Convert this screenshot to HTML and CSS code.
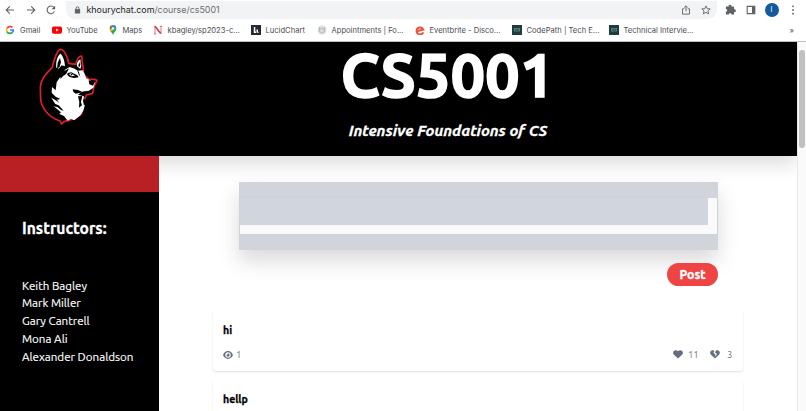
FILE: index.html
```html
<!DOCTYPE html>
<html lang="en">
<head>
<meta charset="utf-8">
<title>CS5001</title>
<link rel="stylesheet" href="styles.css">
</head>
<body>
<div class="browser">
  <div class="toolbar">
    <svg class="nav" viewBox="0 0 10 10"><path d="M9 5H1.4M4.8 1.4 1.2 5l3.6 3.6"/></svg>
    <svg class="nav" viewBox="0 0 10 10"><path d="M1 5h7.6M5.2 1.4 8.8 5 5.2 8.6"/></svg>
    <svg class="nav" viewBox="0 0 10 10"><path d="M8.4 6.4A3.8 3.8 0 1 1 7.9 2.5"/><path class="solid" d="M9.1.7v3.6H5.5z"/></svg>
    <div class="address">
      <svg class="lock" viewBox="0 0 8 9"><path class="solid" d="M1 3.5h6v5H1z"/><path d="M2.4 4V2.5a1.6 1.6 0 0 1 3.2 0V4"/></svg>
      <span class="url"><b>khourychat.com</b>/course/cs5001</span>
      <svg class="act share" viewBox="0 0 10 10"><path d="M3.3 3.8H1.5v5.3h7V3.8H6.7M5 6.3V1M3.2 2.6 5 .8l1.8 1.8"/></svg>
      <svg class="act" viewBox="0 0 10 10"><path d="m5 .9 1.2 2.8 3 .2-2.300 2 .8 3L5 7.300l-2.700 1.600.8-3L.8 3.900l3-.2z"/></svg>
    </div>
    <svg class="ext" viewBox="0 0 10 10"><path class="solid" d="M.8 2.300h2.500a1.300 1.300 0 1 1 2.500 0h2.400v2.500a1.300 1.300 0 1 1 0 2.500v2.300H5.900a1.200 1.200 0 1 0-2.500 0H.8V7a1.200 1.200 0 1 0 0-2.400z"/></svg>
    <svg class="panel" viewBox="0 0 10 10"><path d="M1.200 1.400h7.600v7.200H1.200z"/><path class="solid" d="M6 1h3v8H6z"/></svg>
    <span class="avatar">I</span>
    <svg class="dots" viewBox="0 0 4 10"><circle cx="2" cy="1.300" r=".9"/><circle cx="2" cy="5" r=".9"/><circle cx="2" cy="8.700" r=".9"/></svg>
  </div>
  <div class="bookmarks">
    <span><svg viewBox="0 0 10 10"><g fill="none" stroke-width="1.700"><path stroke="#ea4335" d="M2 3.300a3.400 3.400 0 0 1 5.400-.8"/><path stroke="#fbbc05" d="M2 3.300a3.400 3.400 0 0 0 0 3.400"/><path stroke="#34a853" d="M2 6.700a3.400 3.400 0 0 0 5.200.8"/><path stroke="#4285f4" d="M5 5h3.400a3.400 3.400 0 0 1-1.200 2.500"/></g></svg>Gmail</span>
    <span><svg viewBox="0 0 10 10"><rect y="1.500" width="10" height="7.200" rx="1.700" fill="#f00"/><path fill="#fff" d="m4 3.600 2.700 1.500L4 6.600z"/></svg>YouTube</span>
    <span><svg viewBox="0 0 10 10"><path fill="#34a853" d="M5 10C4.500 7.500 1.700 6.500 1.700 3.400a3.300 3.300 0 0 1 6.600 0C8.300 6.500 5.500 7.500 5 10z"/><path fill="#4285f4" d="M5 .1a3.300 3.300 0 0 1 3 2L5 4.500 3.200 3z"/><path fill="#ea4335" d="M2.400 1.300 4 2.700 2.200 5A4 4 0 0 1 2.400 1.300z"/><path fill="#fbbc05" d="M2 4.800 4 3l1 2-2.200 1.600z"/><circle cx="5" cy="3.400" r="1.200" fill="#fff"/></svg>Maps</span>
    <span><svg viewBox="0 0 10 10"><path fill="none" stroke="#d33b48" d="M2 9V1.500L8 8.500V1M.9 1.300h1.800M.9 9h2.200M6.900 1.300h2.200" stroke-width=".7"/><path stroke="#d33b48" stroke-width="1.600" d="m2.200 1.500 5.500 7"/></svg>kbagley/sp2023-c...</span>
    <span><svg viewBox="0 0 10 10"><path fill="#242832" d="M0 0h10v10H0z"/><path fill="#fff" d="M2.800 2h1.500v4.500H5V8H2.800zM5.500 4.500H7v2l1 1.200H5.500z"/></svg>LucidChart</span>
    <span><svg viewBox="0 0 10 10"><circle cx="5" cy="5" r="4.500" fill="#ddd"/><path fill="none" stroke="#aaa" stroke-width=".7" d="M2.500 2.500 3.500 4h3l1-1.500v4L5 8 2.500 6.500z"/></svg>Appointments | Fo...</span>
    <span><svg viewBox="0 0 10 10"><path fill="none" stroke="#e9543a" stroke-width="2.100" d="M1.500 6.300 8.300 4.600A3.500 3.500 0 1 0 8.300 7.300"/></svg>Eventbrite - Disco...</span>
    <span><svg viewBox="0 0 10 10"><path fill="#203c3c" d="M0 0h10v10H0z"/><path fill="#50807a" d="M2 3h6v3.500H2z"/><path stroke="#203c3c" stroke-width=".5" d="M3 4.300h4M3 5.400h4"/></svg>CodePath | Tech E...</span>
    <span><svg viewBox="0 0 10 10"><path fill="#203c3c" d="M0 0h10v10H0z"/><path fill="#50807a" d="M2 3h6v3.500H2z"/><path stroke="#203c3c" stroke-width=".5" d="M3 4.300h4M3 5.400h4"/></svg>Technical Intervie...</span>
    <span class="more">»</span>
  </div>
</div>
<div class="viewport">
  <div class="page">
    <header class="banner">
      <svg class="logo" viewBox="50 20 190 240">
        <path fill="#000" stroke="#dc2029" stroke-width="5" stroke-linejoin="round" d="M121 27c-9 0-20 28-25 54-22 22-35 38-36 59l1 39c4 25 24 52 58 63l5 9 7-7c22-5 39-12 53-23l1-45 10-3 3-9 19-5 4-20 9-19-8-3-17-1-15-12-2-25-4-32c-9-1-15 14-18 25l-21-3c-2-13-11-41-24-42z"/>
        <path fill="#fff" d="M120 40c-9 7-14 24-12 42l7 3 9-10 10 3c0-14-6-33-14-38zM180 57c-8 4-12 13-10 21l10 8 3-10z"/>
        <path fill="#fff" d="m134 88 14-8 15 5 9 6 15-1 6 11 5 13 26 13-5 15-13 9-23 5-10 7 18 5-3 14 3 13 3-2-5 18-9 14-18 15-10-5-10 6-11-14-14-6 5-5-22-18 11 3-19-30 25 16-23-30 1-17 11 10 3-24 9-14 9-5z"/>
        <path d="m119 53 3 12-4 14-8 8 2-20zM180 64l0 11-4 7-2-8zM122 99l24-15-8 16-10 8-8 8zM142 98l11-2 18 9 4 6-14 2-13-3-7-6zM170 88l6 7 3 11 2 4-5-6zM205 120l12 1 6 6-5 9-11-4zM157 147l16 2 12 5 20-2-5 4-20 1-14 3-7-6zM173 168l13-1-4 19 3 9-9 7 1-18zM79 144l28 26 12 5-5 3-20-5zM97 188l18 7 15 16-8-2-11-9z"/>
        <path fill="#fff" d="m146 101 7-2 11 7-11 2z"/><circle cx="154" cy="103" r="2.500"/>
      </svg>
      <div class="titles"><h1>CS5001</h1><h2>Intensive Foundations of CS</h2></div>
    </header>
    <div class="columns">
      <aside>
        <div class="stripe"></div>
        <h3>Instructors:</h3>
        <ul><li>Keith Bagley</li><li>Mark Miller</li><li>Gary Cantrell</li><li>Mona Ali</li><li>Alexander Donaldson</li></ul>
      </aside>
      <main>
        <div class="composer"><div class="field"><div class="text"></div></div></div>
        <button>Post</button>
        <article>
          <h4>hi</h4>
          <div class="stats">
            <svg class="eye" viewBox="0 0 576 448"><path d="M288 0C160 0 55 86 8 208c-3 10-3 22 0 32 47 122 152 208 280 208s233-86 280-208c3-10 3-22 0-32C521 86 416 0 288 0zm0 64a160 160 0 1 1 0 320 160 160 0 0 1 0-320z" fill-rule="evenodd"/><path d="M288 130c0 50-44 94-94 94a94 94 0 1 0 94-94z"/></svg><span>1</span>
            <svg class="heart" viewBox="0 0 20 18"><path d="M10 17 1.500 9C-3 3 5-3 10 2.500 15-3 23 3 18.500 9z"/></svg><span class="likes">11</span>
            <svg class="heart" viewBox="0 0 20 18"><path d="M10 17 1.500 9C-2 4 3-1.500 8.500 1.500L7 6l4 3-1 5 4-6-4-3 1.500-3.500C17-1.500 22 4 18.500 9z"/></svg><span class="dislikes">3</span>
          </div>
        </article>
        <article><h4>hellp</h4></article>
      </main>
    </div>
  </div>
  <div class="scroll"><div class="thumb"></div></div>
</div>
</body>
</html>
```
FILE: styles.css
```css
* { box-sizing: border-box; }
body { margin: 0; width: 806px; height: 411px; overflow: hidden; background: #fff; font-family: Ubuntu, "Noto Sans", sans-serif; }
h1, h2, h3, h4, ul { margin: 0; padding: 0; }
svg { flex: none; }
.browser { height: 42px; border-bottom: 1px solid #bfc0c2; font-family: Inter, sans-serif; color: #4b4d51; }
.toolbar { height: 19px; display: flex; align-items: center; padding-left: 5px; }
.toolbar svg { fill: none; stroke: #5f6368; stroke-width: 1.1; }
.toolbar .solid { fill: #5f6368; stroke: none; }
.nav { width: 10px; height: 10px; margin-right: 10.500px; }
.address { width: 651px; height: 18px; margin-left: -1px; padding: 0 6px 0 8px; border-radius: 0 0 9px 9px; background: #f1f3f4; display: flex; align-items: center; }
.lock { width: 7px; height: 8px; margin-right: 6px; }
.url { font-size: 8.900px; color: #6b6e72; flex: 1; }
.url b { font-weight: 400; color: #222428; }
.act { width: 10px; height: 10px; }
.toolbar .act { stroke-width: .9; }
.share { margin-right: 10px; }
.ext { width: 11px; height: 11px; margin-left: 8px; }
.panel { width: 10px; height: 10px; margin-left: 10px; }
.avatar { width: 14px; height: 14px; margin-left: 9px; border-radius: 50%; background: #145a9e; color: #fff; font-size: 7px; line-height: 14px; text-align: center; }
.dots { width: 4px; height: 10px; margin-left: 12px; }
.toolbar .dots { fill: #5f6368; stroke: none; }
.bookmarks { height: 22px; display: grid; grid-template-columns: 46.500px 56px 45px 98px 66px 98px 97px 97px 181px 12px; align-items: center; padding-left: 5px; font-size: 7.600px; white-space: nowrap; }
.bookmarks span { display: flex; align-items: center; gap: 5px; }
.bookmarks svg { width: 10px; height: 10px; }
.viewport { height: 369px; display: flex; }
.page { width: 797px; height: 369px; overflow: hidden; }
.banner { position: relative; height: 114px; background: #000; color: #fff; display: flex; box-shadow: 0 8px 18px rgba(0,0,0,.14); }
.logo { width: 63.300px; height: 80px; margin: 5px 0 0 36.700px; }
.titles { flex: 1; text-align: center; }
h1 { font-size: 61.500px; line-height: 66px; margin-left: -2px; -webkit-text-stroke: 1.600px #fff; }
h2 { font-size: 15.400px; line-height: 20px; margin: 13px 0 0 -1px; font-style: italic; -webkit-text-stroke: .3px #fff; }
.columns { display: flex; height: 255px; }
aside { position: relative; z-index: 1; width: 159px; background: #000; color: #fff; }
.stripe { height: 36px; background: #b82025; }
h3 { font-size: 15.600px; line-height: 22px; margin: 25px 0 0 22px; -webkit-text-stroke: .3px #fff; }
ul { list-style: none; margin: 37.500px 0 0 22px; font-size: 11.600px; line-height: 17.900px; white-space: nowrap; -webkit-text-stroke: .15px #fff; }
main { flex: 1; display: flex; flex-direction: column; }
.composer { width: 479px; height: 68px; margin: 26px 0 0 79.500px; padding: 15px 0; background: #d1d5db; box-shadow: 0 11px 20px rgba(0,0,0,.15); flex: none; }
.field { height: 38px; padding: 0 9px 9px 0; border: 1px solid #cdd1d8; background: #fafafa; }
.text { height: 27px; background: #d1d5de; }
button { width: 51px; height: 23px; flex: none; margin: 13px 0 0 508px; padding: 0; border: 0; border-radius: 12px; background: #ef4444; color: #fff; font: 700 12.300px/23px Ubuntu, "Noto Sans", sans-serif; -webkit-text-stroke: .3px #fff; }
article { width: 530px; height: 60px; margin: 25px 0 0 54px; padding: 10px; border-radius: 3px; flex: none; box-shadow: 0 1px 2px rgba(0,0,0,.12); }
article + article { margin-top: 9px; }
h4 { font-size: 10.500px; line-height: 18px; -webkit-text-stroke: .3px #000; }
.stats { display: flex; align-items: center; height: 13px; margin-top: 9px; color: #6b7280; font-size: 9.500px; }
.stats svg { fill: #646d7b; }
.eye { width: 10px; height: 8px; margin-right: 3px; }
.heart { width: 10px; height: 9px; }
.eye + span { flex: 1; }
.likes { width: 18px; margin-left: 5px; }
.dislikes { width: 6px; margin: 0 0 0 7px; }
.stats .heart:last-of-type { margin-left: 4px; }
.scroll { width: 9px; background: #fafafa; border-left: 1px solid #e8e8e8; padding: 8px 1px; }
.thumb { width: 6px; height: 98px; border-radius: 3px; background: #c1c1c1; }
```
